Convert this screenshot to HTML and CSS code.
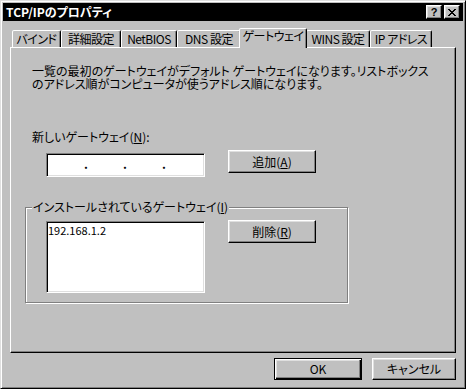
FILE: index.html
```html
<!DOCTYPE html>
<html>
<head>
    <meta charset="utf-8">
    <title>TCP/IPのプロパティ</title>
    <link rel="stylesheet" href="styles.css">
</head>
<body>
    <div class="window">
        <div class="titlebar">
            <span class="title">TCP/IPのプロパティ</span>
            <div class="caption-btns">
                <span class="cbtn help">?</span>
                <span class="cbtn">
                    <svg width="8" height="7" viewBox="0 0 8 7" shape-rendering="crispEdges">
                        <path d="M0 0h2v1h-2zM6 0h2v1h-2zM1 1h2v1h-2zM5 1h2v1h-2zM2 2h4v1h-4zM3 3h2v1h-2zM2 4h4v1h-4zM1 5h2v1h-2zM5 5h2v1h-2zM0 6h2v1h-2zM6 6h2v1h-2z" fill="#000"/>
                    </svg>
                </span>
            </div>
        </div>

        <!-- Tabs -->
        <div class="tabs">
            <div class="tab">バインド</div>
            <div class="tab">詳細設定</div>
            <div class="tab">NetBIOS</div>
            <div class="tab">DNS 設定</div>
            <div class="tab active">ゲートウェイ</div>
            <div class="tab">WINS 設定</div>
            <div class="tab">IP アドレス</div>
        </div>

        <div class="panel">
            <p class="desc">一覧の最初のゲートウェイがデフォルト ゲートウェイになります。リストボックス<br>のアドレス順がコンピュータが使うアドレス順になります。</p>

            <div class="label">新しいゲートウェイ(<u>N</u>):</div>
            <div class="row">
                <div class="ipbox">
                    <span class="seg"></span><span class="dot">.</span>
                    <span class="seg"></span><span class="dot">.</span>
                    <span class="seg"></span><span class="dot">.</span>
                    <span class="seg"></span>
                </div>
                <button class="btn">追加(<u>A</u>)</button>
            </div>

            <div class="group">
                <span class="legend">インストールされているゲートウェイ(<u>I</u>)</span>
                <div class="row">
                    <div class="listbox">192.168.1.2</div>
                    <button class="btn">削除(<u>R</u>)</button>
                </div>
            </div>
        </div>

        <div class="actions">
            <button class="btn default">OK</button>
            <button class="btn cancel">キャンセル</button>
        </div>
    </div>
</body>
</html>
```

FILE: styles.css
```css
body {
    margin: 0;
    background: #c0c0c0;
    font-family: "Noto Sans CJK JP", "Liberation Sans", sans-serif;
    font-size: 12px;
    font-feature-settings: "palt";
    color: #000;
}

.window {
    width: 466px;
    height: 389px;
    box-sizing: border-box;
    border: 1px solid;
    border-color: #dfdfdf #000 #000 #dfdfdf;
    box-shadow: inset 1px 1px #fff, inset -1px -1px #808080;
    padding: 2px;
    background: #c0c0c0;
}

/* Title bar */
.titlebar {
    height: 18px;
    background: #000;
    color: #fff;
    display: flex;
    align-items: center;
    justify-content: space-between;
    padding: 0 3px 0 3px;
}

.title {
    font-weight: bold;
    line-height: 14px;
}

.caption-btns {
    display: flex;
}

.cbtn {
    width: 16px;
    height: 14px;
    box-sizing: border-box;
    background: #c0c0c0;
    border: 1px solid;
    border-color: #fff #000 #000 #fff;
    box-shadow: inset -1px -1px #808080, inset 1px 1px #dfdfdf;
    display: flex;
    align-items: center;
    justify-content: center;
    color: #000;
}

.cbtn + .cbtn {
    margin-left: 2px;
}

.help {
    font-family: "Liberation Sans", sans-serif;
    font-weight: bold;
    font-size: 11px;
    line-height: 11px;
}

/* Tabs */
.tabs {
    display: flex;
    align-items: flex-end;
    height: 19px;
    margin: 7px 7px 0;
    padding-left: 2px;
}

.tab {
    box-sizing: border-box;
    height: 17px;
    border: 1px solid;
    border-bottom: 0;
    border-color: #fff #000 transparent #fff;
    border-radius: 2px 2px 0 0;
    box-shadow: inset -1px 0 #808080;
    padding-top: 1px;
    line-height: 14px;
    letter-spacing: -0.5px;
    text-align: center;
    white-space: nowrap;
    background: #c0c0c0;
}

.tab:nth-child(1) { width: 49px; }
.tab:nth-child(2) { width: 60px; }
.tab:nth-child(3) { width: 56px; }
.tab:nth-child(4) { width: 64px; }
.tab:nth-child(5) { width: 68px; }
.tab:nth-child(6) { width: 64px; }
.tab:nth-child(7) { width: 62px; }

.tab.active {
    height: 20px;
    margin: 0 -1px -1px -2px;
    padding-top: 0;
    position: relative;
    z-index: 1;
}

/* Page */
.panel {
    margin: 0 7px;
    height: 306px;
    box-sizing: border-box;
    border: 1px solid;
    border-color: #fff #000 #000 #fff;
    box-shadow: inset -1px -1px #808080;
    padding: 16px 0 0 14px;
}

.desc {
    margin: 0 0 0 7px;
    line-height: 13px;
    white-space: nowrap;
}

.label {
    margin: 41px 0 0 7px;
    line-height: 12px;
}

.row {
    display: flex;
    align-items: flex-start;
    margin-top: 7px;
}

.ipbox {
    width: 159px;
    height: 24px;
    box-sizing: border-box;
    margin: 3px 0 0 21px;
    background: #fff;
    border: 1px solid;
    border-color: #808080 #fff #fff #808080;
    box-shadow: inset 1px 1px #000, inset -1px -1px #dfdfdf;
    display: flex;
    padding-left: 1px;
    line-height: 20px;
}

.seg {
    width: 36px;
}

.dot {
    width: 3px;
    text-align: center;
    font-weight: bold;
}

.btn {
    box-sizing: border-box;
    width: 88px;
    height: 23px;
    padding: 0;
    margin: 0 0 0 23px;
    background: #c0c0c0;
    border: 1px solid;
    border-color: #fff #000 #000 #fff;
    box-shadow: inset -1px -1px #808080, inset 1px 1px #dfdfdf;
    font: inherit;
    color: #000;
    line-height: 14px;
}

.btn.default {
    border-color: #000;
    box-shadow: inset 1px 1px #fff, inset -1px -1px #000, inset -2px -2px #808080, inset 2px 2px #dfdfdf;
}

.group {
    position: relative;
    width: 323px;
    height: 96px;
    box-sizing: border-box;
    margin-top: 30px;
    border: 1px solid #808080;
    box-shadow: 1px 1px 0 #fff, inset 1px 1px 0 #fff;
    padding: 12px 0 0 20px;
}

.group .row {
    margin-top: 0;
}

.legend {
    position: absolute;
    top: -7px;
    left: 6px;
    padding: 0 1px;
    line-height: 12px;
    background: #c0c0c0;
}

.listbox {
    width: 159px;
    height: 72px;
    box-sizing: border-box;
    margin-top: 1px;
    background: #fff;
    border: 1px solid;
    border-color: #808080 #fff #fff #808080;
    box-shadow: inset 1px 1px #000, inset -1px -1px #dfdfdf;
    padding: 2px 0 0 1px;
    font-size: 11px;
    line-height: 13px;
}

/* Dialog buttons */
.actions {
    display: flex;
    justify-content: flex-end;
    margin: 5px 7px 0;
}

.actions .btn {
    height: 22px;
    margin-left: 10px;
}

.actions .cancel {
    width: 84px;
}
```
